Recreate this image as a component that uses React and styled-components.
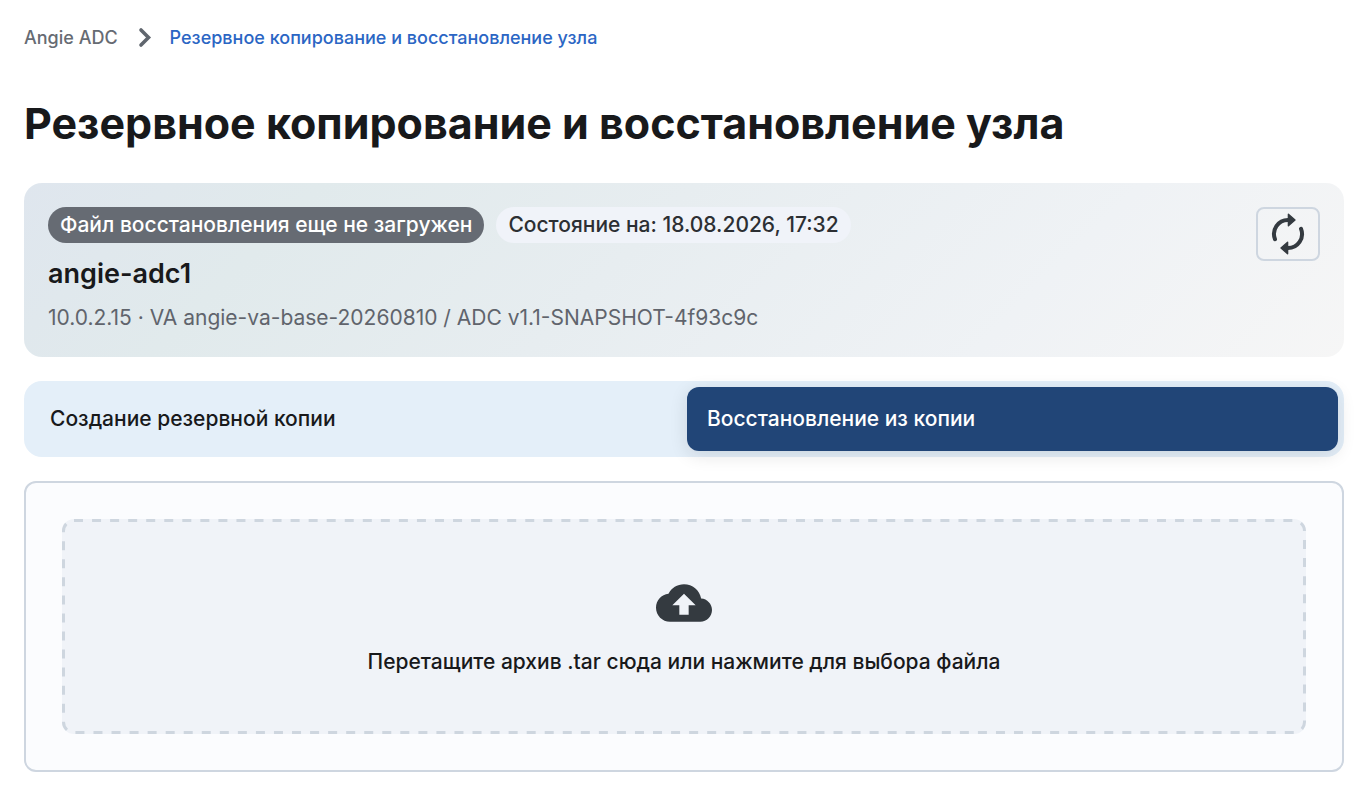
import React, { useState } from 'react';
import styled, { createGlobalStyle } from 'styled-components';

const GlobalStyle = createGlobalStyle`
    * {
        box-sizing: border-box;
    }

    body {
        margin: 0;
        background: #ffffff;
        color: #18191b;
        font-family: Inter, 'Noto Sans', sans-serif;
    }
`;

const Page = styled.main`
    display: flex;
    flex-direction: column;
    gap: 24px;
    padding: 24px 22px 28px 24px;
`;

const Breadcrumbs = styled.nav`
    display: flex;
    align-items: center;
    gap: 16px;
    height: 26px;
    font-size: 18px;
    font-weight: 500;
`;

const Crumb = styled.a`
    color: ${props => props.$active ? '#2b66c4' : '#666b73'};
    text-decoration: none;
`;

const Title = styled.h1`
    margin: 22px 0 9px;
    font-size: 43px;
    line-height: 54px;
    font-weight: 700;
`;

const NodeCard = styled.section`
    display: flex;
    align-items: flex-start;
    justify-content: space-between;
    padding: 24px;
    border-radius: 18px;
    background: linear-gradient(135deg, #dfe6ee 0%, #e1eaec 20%, #e7edf0 45%, #eff2f5 75%, #f6f6f6 100%);
`;

const NodeInfo = styled.div`
    display: flex;
    flex-direction: column;
`;

const Badges = styled.div`
    display: flex;
    gap: 12px;
`;

const Badge = styled.span`
    padding: 0 12px;
    border-radius: 18px;
    background: ${props => props.$dark ? '#666b73' : '#f0f3f9'};
    color: ${props => props.$dark ? '#ffffff' : '#2c2f33'};
    font-size: 21px;
    line-height: 36px;
    font-weight: 500;
`;

const NodeName = styled.h2`
    margin: 12px 0 10px;
    font-size: 27px;
    line-height: 38px;
    font-weight: 600;
`;

const NodeMeta = styled.p`
    margin: 0;
    color: #60646c;
    font-size: 21px;
    line-height: 30px;
`;

const RefreshButton = styled.button`
    display: flex;
    align-items: center;
    justify-content: center;
    width: 64px;
    height: 54px;
    padding: 0;
    border: 2px solid #ced6e0;
    border-radius: 8px;
    background: transparent;
    color: #343a40;
    cursor: pointer;
`;

const Tabs = styled.div`
    display: flex;
    gap: 6px;
    padding: 6px;
    border-radius: 18px;
    background: #e4eff9;
`;

const Tab = styled.button`
    flex: 1;
    padding: 0 20px;
    border: 0;
    border-radius: 12px;
    background: ${props => props.$active ? '#214577' : 'transparent'};
    box-shadow: ${props => props.$active ? '0 4px 18px rgba(24, 25, 27, 0.12)' : 'none'};
    color: ${props => props.$active ? '#ffffff' : '#18191b'};
    font-family: inherit;
    font-size: 21px;
    line-height: 64px;
    font-weight: 500;
    text-align: left;
    cursor: pointer;
`;

const Panel = styled.section`
    padding: 36px;
    border: 2px solid #ced6e0;
    border-radius: 12px;
    background: #fbfcfe;
`;

const DropZone = styled.label`
    position: relative;
    display: flex;
    flex-direction: column;
    align-items: center;
    gap: 14px;
    padding: 56px 24px;
    border-radius: 12px;
    background: #f0f3f8;
    font-size: 21px;
    line-height: 33px;
    font-weight: 500;
    cursor: pointer;
`;

const DashedOutline = styled.svg`
    position: absolute;
    inset: 0;
    width: 100%;
    height: 100%;
    pointer-events: none;

    rect {
        width: calc(100% - 3px);
        height: calc(100% - 3px);
    }
`;

const FileInput = styled.input`
    position: absolute;
    width: 1px;
    height: 1px;
    opacity: 0;
`;

function ChevronIcon() {
    return (
        <svg width="20" height="26" viewBox="0 0 20 26" fill="none" stroke="#60666e" strokeWidth="3.6" strokeLinecap="round" aria-hidden="true">
            <path d="M7 6l7.5 7.5L7 21" />
        </svg>
    );
}

function RefreshIcon() {
    return (
        <svg width="44" height="44" viewBox="0 0 44 44" fill="none" stroke="currentColor" strokeLinecap="round" strokeLinejoin="round" aria-hidden="true">
            <path d="M9 27.2A14 14 0 0 1 22 8M35 16.8A14 14 0 0 1 22 36" strokeWidth="4" />
            <path d="M22.4 2.2L29 8l-6.6 5.8zM21.6 41.8L15 36l6.6-5.8z" fill="currentColor" strokeWidth="1.4" />
        </svg>
    );
}

function CloudIcon() {
    return (
        <svg width="56" height="56" viewBox="0 0 24 24" fill="#343a40" aria-hidden="true">
            <path d="M19.35 10.04C18.67 6.59 15.64 4 12 4 9.11 4 6.6 5.64 5.35 8.04 2.34 8.36 0 10.91 0 14c0 3.31 2.69 6 6 6h13c2.76 0 5-2.24 5-5 0-2.64-2.05-4.78-4.65-4.96zM14 13v4h-4v-4H7l5-5 5 5h-3z" />
        </svg>
    );
}

function App() {
    const [tab, setTab] = useState('restore');

    return (
        <>
            <GlobalStyle />
            <Page>
                <Breadcrumbs>
                    <Crumb href="#adc">Angie ADC</Crumb>
                    <ChevronIcon />
                    <Crumb href="#backup" $active>Резервное копирование и восстановление узла</Crumb>
                </Breadcrumbs>
                <Title>Резервное копирование и восстановление узла</Title>
                <NodeCard>
                    <NodeInfo>
                        <Badges>
                            <Badge $dark>Файл восстановления еще не загружен</Badge>
                            <Badge>Состояние на: 18.08.2026, 17:32</Badge>
                        </Badges>
                        <NodeName>angie-adc1</NodeName>
                        <NodeMeta>10.0.2.15 · VA angie-va-base-20260810 / ADC v1.1-SNAPSHOT-4f93c9c</NodeMeta>
                    </NodeInfo>
                    <RefreshButton type="button" aria-label="Обновить">
                        <RefreshIcon />
                    </RefreshButton>
                </NodeCard>
                <Tabs role="tablist">
                    <Tab type="button" role="tab" aria-selected={tab === 'create'} $active={tab === 'create'} onClick={() => setTab('create')}>
                        Создание резервной копии
                    </Tab>
                    <Tab type="button" role="tab" aria-selected={tab === 'restore'} $active={tab === 'restore'} onClick={() => setTab('restore')}>
                        Восстановление из копии
                    </Tab>
                </Tabs>
                <Panel>
                    <DropZone>
                        <DashedOutline aria-hidden="true">
                            <rect x="1.5" y="1.5" rx="10.5" fill="none" stroke="#ced6df" strokeWidth="3" strokeDasharray="9 9.05" />
                        </DashedOutline>
                        <FileInput type="file" accept=".tar" />
                        <CloudIcon />
                        Перетащите архив .tar сюда или нажмите для выбора файла
                    </DropZone>
                </Panel>
            </Page>
        </>
    );
}

export default App;
